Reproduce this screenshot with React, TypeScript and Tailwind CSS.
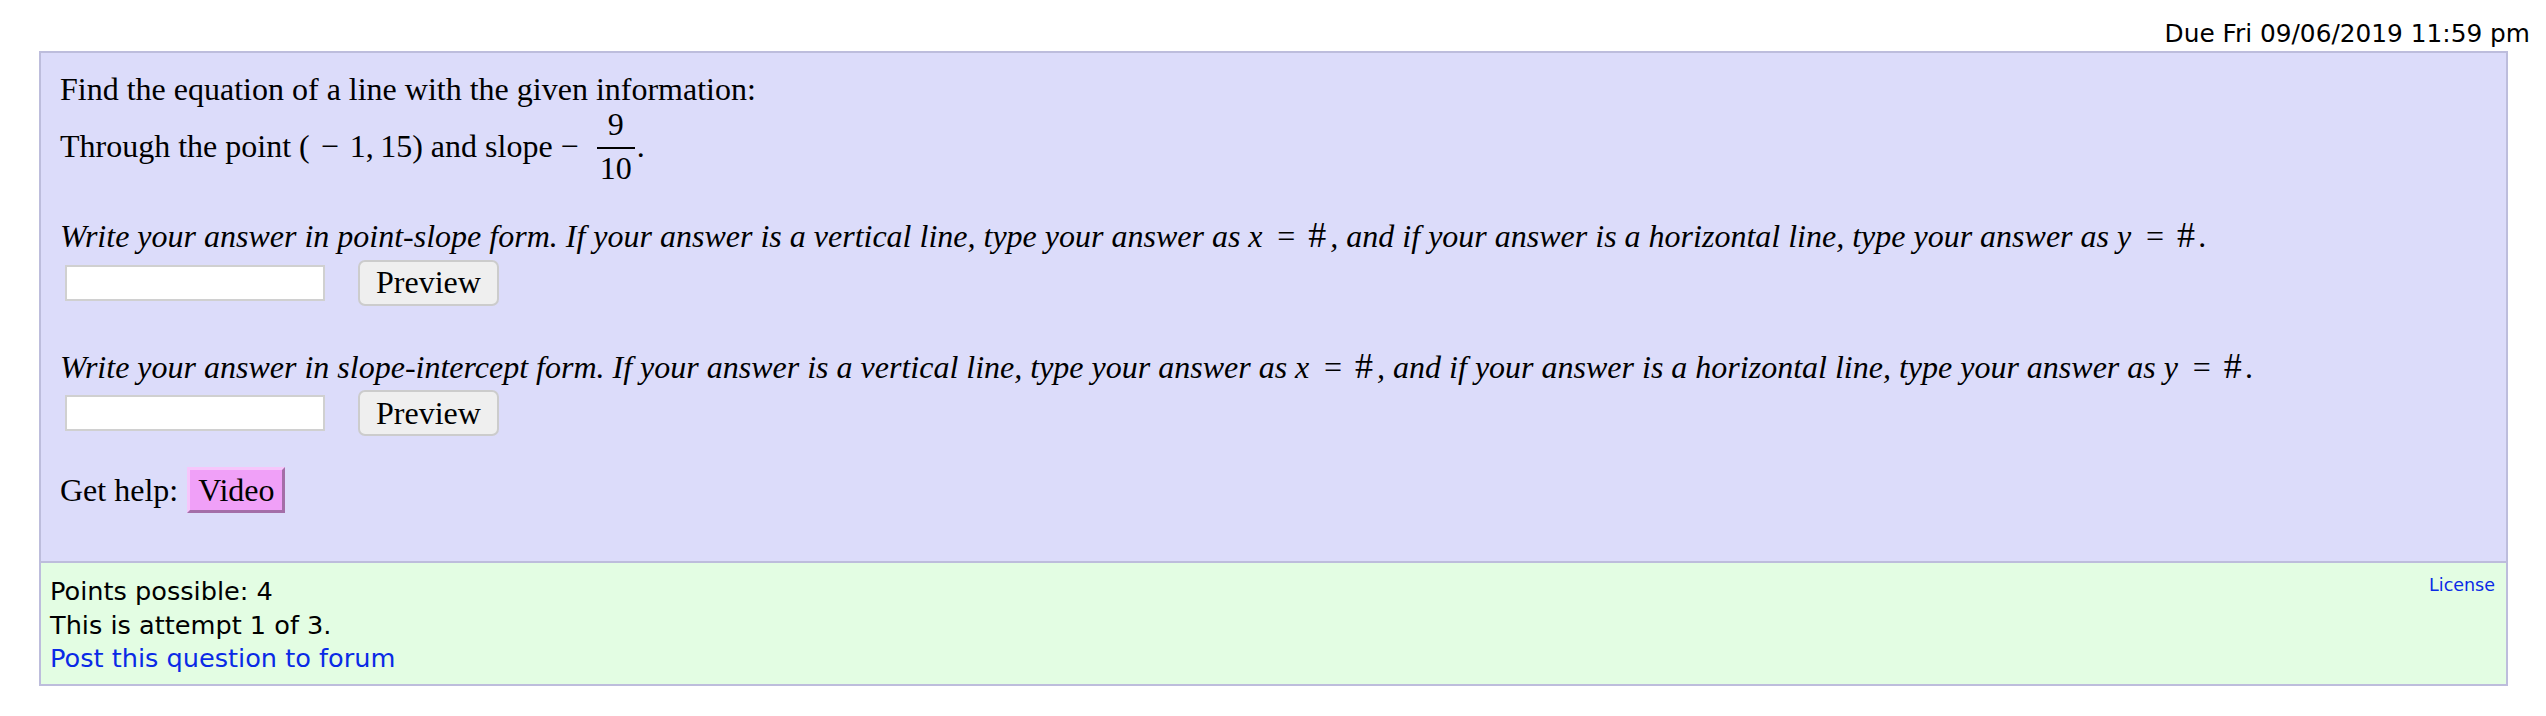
import React from "react";

function Frac({ num, den }: { num: string; den: string }) {
  return (
    <span className="inline-flex flex-col items-center align-[22px] pt-[0px] ml-[18px] mr-[2px]">
      <span className="leading-[32px] mb-[7px]">{num}</span>
      <span className="block h-[2px] w-full bg-black"></span>
      <span className="leading-[32px] mt-[3px] px-[3px]">{den}</span>
    </span>
  );
}

function MathEq({ v }: { v: string }) {
  return (
    <span>
      <span className="italic inline-block w-[16px]">{v}</span>
      <span className="not-italic inline-block w-[44px] text-center">=</span>
      <span className="not-italic inline-block w-[22px] text-left text-[36px] leading-none">#</span>
    </span>
  );
}

function AnswerRow() {
  return (
    <div className="flex items-center mt-[5px]">
      <input
        type="text"
        className="ml-[5px] w-[260px] h-[36px] bg-white border-2 border-[#d0d0d0] outline-none"
      />
      <button
        type="button"
        className="ml-[33px] w-[141px] h-[46px] bg-[#efefef] border-2 border-[#cccccc] rounded-[7px] text-[32px] leading-[36.8px] text-black font-['Liberation_Serif',serif]"
      >
        Preview
      </button>
    </div>
  );
}

export default function App() {
  return (
    <div className="min-h-[716px] bg-white text-black">
      <div className="flex justify-end pt-[17px] pr-[16px] font-['DejaVu_Sans',sans-serif] text-[24.8px] leading-[33px]">
        Due Fri 09/06/2019 11:59 pm
      </div>
      <div className="ml-[39px] mr-[38px] mt-[1px] border-2 border-[#bdbddc]">
        <div className="bg-[#dcdcfa] pl-[19px] pr-[20px] pt-[18px] pb-[48px] font-['Liberation_Serif',serif] text-[32px] leading-[36.8px]">
          <p>
            Find the equation of a line with the given information:
            <br />
            Through the point (<span className="inline-block mx-[11px]">−</span>1,{"\u2009"}15) and slope
            <span className="inline-block ml-[8px]">−</span>
            <Frac num="9" den="10" />.
          </p>
          <p className="mt-[33px] italic">
            Write your answer in point-slope form. If your answer is a vertical line, type your answer as{" "}
            <MathEq v="x" />, and if your answer is a horizontal line, type your answer as <MathEq v="y" />.
          </p>
          <AnswerRow />
          <p className="mt-[42px] italic">
            Write your answer in slope-intercept form. If your answer is a vertical line, type your answer as{" "}
            <MathEq v="x" />, and if your answer is a horizontal line, type your answer as <MathEq v="y" />.
          </p>
          <AnswerRow />
          <div className="flex items-center mt-[31px]">
            <span>Get help:</span>
            <button
              type="button"
              className="ml-[9px] h-[46px] px-[8px] bg-[#f0a0f8] border-[3px] border-t-[#f6c6fb] border-l-[#f6c6fb] border-r-[#a46ea8] border-b-[#a46ea8] text-[32px] leading-[36.8px] text-black font-['Liberation_Serif',serif]"
            >
              Video
            </button>
          </div>
        </div>
        <div className="flex justify-between items-start bg-[#e3fde3] border-t-2 border-[#bdbddc] pl-[9px] pr-[11px] pt-[12px] pb-[8px] font-['DejaVu_Sans',sans-serif]">
          <div className="text-[25.6px] leading-[33.5px]">
            <div>Points possible: 4</div>
            <div>This is attempt 1 of 3.</div>
            <div>
              <a href="#" className="text-[#0a2ae6]">
                Post this question to forum
              </a>
            </div>
          </div>
          <a href="#" className="text-[17.5px] leading-[20px] text-[#0a2ae6]">
            License
          </a>
        </div>
      </div>
    </div>
  );
}
